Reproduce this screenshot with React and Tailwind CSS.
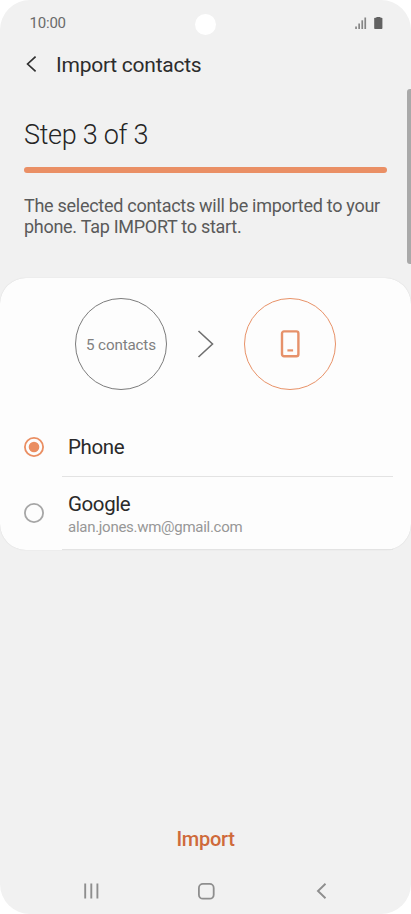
import { useState } from "react";

const accounts = [
  { id: "phone", name: "Phone" },
  { id: "google", name: "Google", email: "alan.jones.wm@gmail.com" },
];

function StatusBar() {
  return (
    <div className="flex h-[47px] items-center justify-between pr-[28px] pl-[29.5px]">
      <span className="text-[15px] leading-none tracking-[-0.2px] text-[#6a6a6a]">
        10:00
      </span>
      <div className="flex items-center gap-[7px]">
        <svg width="12" height="13" viewBox="0 0 12 13" fill="#858585">
          <rect x="0.2" y="9.5" width="1.7" height="2.5" />
          <rect x="3.3" y="6.5" width="1.7" height="5.5" />
          <rect x="6.4" y="3.3" width="1.7" height="8.7" />
          <rect x="9.4" y="0.5" width="1.7" height="11.5" />
        </svg>
        <svg width="9" height="13" viewBox="0 0 9 13" fill="#626262">
          <rect x="2.4" y="-0.4" width="4" height="2" />
          <rect x="0.2" y="0.8" width="8.2" height="11.3" rx="0.8" />
        </svg>
      </div>
    </div>
  );
}

function Radio({ checked }) {
  return (
    <svg className="mb-px" width="20" height="20" viewBox="0 0 20 20" fill="none">
      <circle
        cx="10"
        cy="10"
        r="9.1"
        stroke={checked ? "#ea8e62" : "#a6a6a6"}
        strokeWidth="1.8"
      />
      {checked && <circle cx="10" cy="10" r="5.3" fill="#ea8e62" />}
    </svg>
  );
}

function Transfer() {
  return (
    <div className="flex items-center pt-[20px] pl-[75px]">
      <div className="flex size-[92px] items-center justify-center rounded-full border border-[#7c7c7c] text-[15.2px] tracking-[-0.15px] whitespace-nowrap text-[#808080]">
        <span className="pt-[2px]">5 contacts</span>
      </div>
      <div className="flex w-[77px] justify-center">
        <svg width="18" height="28" viewBox="0 0 18 28" fill="none">
          <path d="M1.5 1 15.5 14 1.5 27" stroke="#6f6f6f" strokeWidth="1.6" />
        </svg>
      </div>
      <div className="flex size-[92px] items-center justify-center rounded-full border border-[#e89268]">
        <svg width="20" height="28" viewBox="0 0 20 28" fill="none" stroke="#e6916a">
          <rect x="2" y="1.4" width="16.4" height="24.8" rx="2" strokeWidth="2.4" />
          <path d="M7.4 20.4h5.7" strokeWidth="2.2" />
        </svg>
      </div>
    </div>
  );
}

function NavBar() {
  return (
    <div className="flex h-[46px] items-center pl-[83px]">
      <button aria-label="Recents">
        <svg width="17" height="16" viewBox="0 0 17 16" stroke="#8e8e8e" strokeWidth="1.9">
          <path d="M2.2 0.5v15M8.3 0.5v15M14.4 0.5v15" />
        </svg>
      </button>
      <button aria-label="Home" className="ml-[98px]">
        <svg width="17" height="17" viewBox="0 0 17 17" fill="none" stroke="#8e8e8e">
          <rect x="0.9" y="0.9" width="14.8" height="14.8" rx="4" strokeWidth="1.8" />
        </svg>
      </button>
      <button aria-label="Back" className="ml-[101px]">
        <svg width="11" height="16" viewBox="0 0 11 16" fill="none" stroke="#8e8e8e">
          <path d="M9.5 0.8 2 8l7.5 7.2" strokeWidth="1.9" />
        </svg>
      </button>
    </div>
  );
}

export default function App() {
  const [selected, setSelected] = useState("phone");

  return (
    <div className="h-[914px] w-[411px] overflow-hidden bg-white font-['Roboto',sans-serif]">
      <div className="relative flex h-full flex-col overflow-hidden rounded-[30px] bg-[#f1f1f1]">
        {/* camera cutout */}
        <div className="absolute top-[13.5px] left-[194.5px] size-[21px] rounded-full bg-white" />
        {/* scrollbar */}
        <div className="absolute top-[89px] right-0 h-[175px] w-[4px] rounded-l-[3px] bg-[#a9a9a9]" />

        <StatusBar />

        <header className="flex h-[34px] items-center pl-[26px]">
          <button aria-label="Back">
            <svg width="11" height="17" viewBox="0 0 11 17" fill="none">
              <path d="M9.6 0.6 1.6 8l8 7.4" stroke="#303030" strokeWidth="1.7" />
            </svg>
          </button>
          <h1 className="ml-[19px] pt-[3px] text-[21px] leading-none tracking-[-0.25px] whitespace-nowrap text-[#2c2c2c]">
            Import contacts
          </h1>
        </header>

        <section className="h-[197px] px-6 pt-[38px]">
          <h2 className="text-[27px] leading-[32px] font-light tracking-[-0.3px] text-[#252525]">
            Step 3 of 3
          </h2>
          <div className="mt-[16px] h-[6px] rounded-full bg-[#ea8f65]" />
          <p className="mt-[22px] text-[18px] leading-[21px] tracking-[-0.28px] whitespace-nowrap text-[#5a5a5a]">
            The selected contacts will be imported to your
            <br />
            phone. Tap IMPORT to start.
          </p>
        </section>

        <main className="h-[272px] rounded-[26px] bg-[#fdfdfd] shadow-[0_0_1px_#c8c8c8]">
          <Transfer />
          <div className="mt-[27px]">
            {accounts.map((account) => (
              <button
                key={account.id}
                onClick={() => setSelected(account.id)}
                className={
                  account.email
                    ? "flex h-[73px] w-full items-center pl-[24px] text-left"
                    : "flex h-[60px] w-full items-center pl-[24px] text-left"
                }
              >
                <Radio checked={selected === account.id} />
                <span className="mr-[18px] ml-[18px] flex h-full flex-1 flex-col justify-center border-b border-[#e3e3e3] pl-[6px]">
                  <span
                    className={
                      account.email
                        ? "pt-[3px] text-[20.5px] leading-[24px] tracking-[-0.4px] text-[#2a2a2a]"
                        : "text-[20.5px] leading-[24px] tracking-[-0.4px] text-[#2a2a2a]"
                    }
                  >
                    {account.name}
                  </span>
                  {account.email && (
                    <span className="pt-px text-[15px] leading-[21px] tracking-[-0.28px] text-[#979797]">
                      {account.email}
                    </span>
                  )}
                </span>
              </button>
            ))}
          </div>
        </main>

        <footer className="mt-auto">
          <div className="flex justify-center pb-[17px]">
            <button className="text-[20px] leading-[24px] font-medium tracking-[-0.3px] text-[#cf6a3b]">
              Import
            </button>
          </div>
          <NavBar />
        </footer>
      </div>
    </div>
  );
}
